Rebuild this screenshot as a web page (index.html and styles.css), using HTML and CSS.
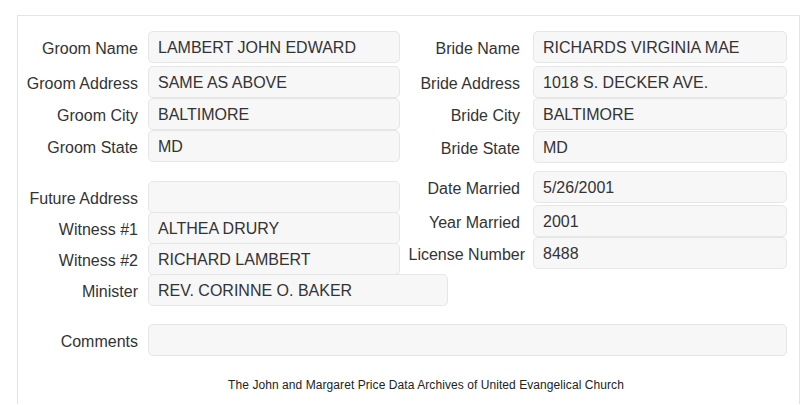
FILE: index.html
```html
<!DOCTYPE html>
<html lang="en">

<head>
    <meta charset="UTF-8">
    <meta name="viewport" content="width=device-width, initial-scale=1.0">
    <title>Marriage Record</title>
    <link rel="stylesheet" href="styles.css">
</head>

<body>
    <div class="panel">
        <div class="columns">
            <div class="col left">
                <div class="field first">
                    <label>Groom Name</label>
                    <div class="box">LAMBERT JOHN EDWARD</div>
                </div>
                <div class="field second">
                    <label>Groom Address</label>
                    <div class="box">SAME AS ABOVE</div>
                </div>
                <div class="field">
                    <label>Groom City</label>
                    <div class="box">BALTIMORE</div>
                </div>
                <div class="field">
                    <label>Groom State</label>
                    <div class="box">MD</div>
                </div>

                <div class="field future">
                    <label>Future Address</label>
                    <div class="box"></div>
                </div>
                <div class="field tight">
                    <label>Witness #1</label>
                    <div class="box">ALTHEA DRURY</div>
                </div>
                <div class="field tight">
                    <label>Witness #2</label>
                    <div class="box">RICHARD LAMBERT</div>
                </div>
                <div class="field tight">
                    <label>Minister</label>
                    <div class="box wide">REV. CORINNE O. BAKER</div>
                </div>
            </div>

            <div class="col right">
                <div class="field first">
                    <label>Bride Name</label>
                    <div class="box">RICHARDS VIRGINIA MAE</div>
                </div>
                <div class="field second">
                    <label>Bride Address</label>
                    <div class="box">1018 S. DECKER AVE.</div>
                </div>
                <div class="field">
                    <label>Bride City</label>
                    <div class="box">BALTIMORE</div>
                </div>
                <div class="field state">
                    <label>Bride State</label>
                    <div class="box">MD</div>
                </div>

                <div class="field married">
                    <label>Date Married</label>
                    <div class="box">5/26/2001</div>
                </div>
                <div class="field year">
                    <label>Year Married</label>
                    <div class="box">2001</div>
                </div>
                <div class="field">
                    <label class="long">License Number</label>
                    <div class="box">8488</div>
                </div>
            </div>
        </div>

        <div class="field comments">
            <label>Comments</label>
            <div class="box"></div>
        </div>

        <p class="footer">The John and Margaret Price Data Archives of United Evangelical Church</p>
    </div>
</body>

</html>
```

FILE: styles.css
```css
body {
    font-family: "Liberation Sans", Arial, sans-serif;
    font-size: 16px;
    color: #333;
    background-color: #fff;
    margin: 0;
    padding: 0;
}

.panel {
    margin: 15px 5px 0 17px;
    padding: 15px 12px 12px 0;
    border: 1px solid #e3e3e3;
    border-bottom: none;
}

.columns {
    display: grid;
    grid-template-columns: 382px 1fr;
}

.field {
    display: flex;
    align-items: center;
    height: 32px;
}

.field label {
    width: 120px;
    flex-shrink: 0;
    text-align: right;
    padding-top: 3px;
    white-space: nowrap;
}

.left .field label,
.comments label {
    margin-right: 10px;
}

.right .field label {
    margin-right: 13px;
}

.right .field label.long {
    margin-right: 8px;
    margin-left: 5px;
    width: 120px;
    direction: rtl;
}

.box {
    box-sizing: border-box;
    height: 32px;
    flex: 1;
    padding: 5px 9px 0;
    line-height: 22px;
    background-color: #f7f7f7;
    border: 1px solid #e6e6e6;
    border-radius: 5px;
    white-space: nowrap;
}

.left .box {
    flex: none;
    width: 252px;
}

.left .box.wide {
    width: 300px;
}

.field.second {
    margin-top: 3px;
}

.field.state {
    margin-top: 1px;
}

.field.future {
    margin-top: 19px;
}

.field.tight {
    margin-top: -1px;
}

.field.married {
    margin-top: 8px;
}

.field.year {
    margin-top: 2px;
}

.field.comments {
    margin-top: 18px;
}

.footer {
    margin: 22px 0 0;
    padding-left: 47px;
    text-align: center;
    font-size: 12px;
    line-height: 14px;
    letter-spacing: 0.07px;
    color: #222;
}
```
